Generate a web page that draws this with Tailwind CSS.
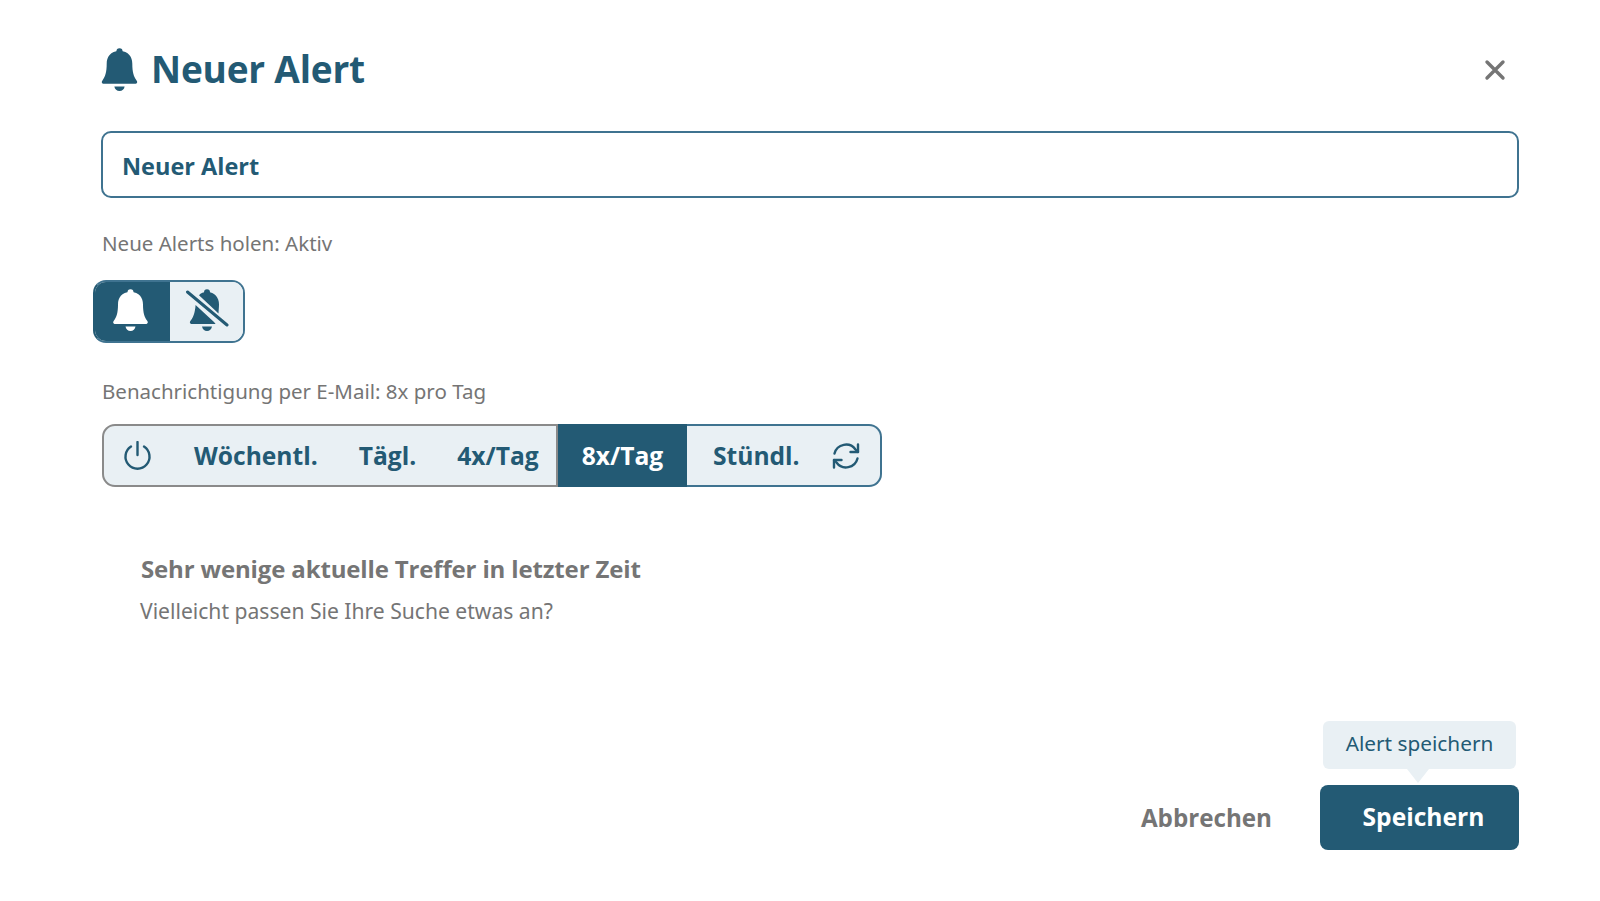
<!DOCTYPE html>
<html lang="de">
<head>
  <meta charset="UTF-8" />
  <meta name="viewport" content="width=device-width, initial-scale=1.0" />
  <script src="https://cdn.jsdelivr.net/npm/@tailwindcss/browser@4"></script>
  <title>Neuer Alert</title>
</head>
<body class="bg-white font-['Open_Sans',sans-serif] text-[#235a74]">
  <div class="h-[901px] flex flex-col pl-[101px] pr-[81px] pt-[47px] pb-[51px] overflow-hidden">

    <!-- Header -->
    <header class="flex items-center h-[44px] relative">
      <svg class="w-[37px] h-[43px] shrink-0" viewBox="0 0 36 42" fill="currentColor">
        <circle cx="18" cy="3.2" r="3" />
        <path d="M18 3C9 3 5.5 9 5.5 15.5C5.5 24 4 28 1.5 31.5C0 33.3 .8 35 2.8 35H33.2C35.2 35 36 33.3 34.5 31.5C32 28 30.5 24 30.5 15.5C30.5 9 27 3 18 3Z" />
        <path d="M13 37.5H23C22.6 40.2 20.6 42 18 42C15.4 42 13.4 40.2 13 37.5Z" />
      </svg>
      <h1 class="ml-[13px] -mt-[1px] text-[37px] leading-none font-bold tracking-[-0.2px]">Neuer Alert</h1>
      <button class="ml-auto mr-[13px] mt-[2px] text-[#757575]">
        <svg class="w-[22px] h-[22px]" viewBox="0 0 22 22" fill="none" stroke="currentColor" stroke-width="3.4" stroke-linecap="round"><path d="M3 3L19 19M19 3L3 19" /></svg>
      </button>
    </header>

    <!-- Title input -->
    <div class="mt-[40px] h-[67px] border-2 border-[#3f7390] rounded-[10px] flex items-center px-[19px]">
      <span class="mt-[5px] text-[23.5px] font-bold">Neuer Alert</span>
    </div>

    <!-- Fetch toggle -->
    <p class="mt-[31px] ml-[1px] text-[20.5px] leading-[28px] text-[#757575] font-['Noto_Sans',sans-serif]">Neue Alerts holen: Aktiv</p>
    <div class="mt-[23px] -ml-[8px] w-[152px] h-[63px] flex rounded-[13px] border-2 border-[#3f7390] border-l-[#235a74] overflow-hidden">
      <div class="w-[75px] bg-[#235a74] flex items-center justify-center text-white">
        <svg class="w-[37px] h-[42px] -mt-[3px] -ml-[4px]" viewBox="0 0 36 42" fill="currentColor">
          <circle cx="18" cy="3.2" r="3" />
          <path d="M18 3C9 3 5.5 9 5.5 15.5C5.5 24 4 28 1.5 31.5C0 33.3 .8 35 2.8 35H33.2C35.2 35 36 33.3 34.5 31.5C32 28 30.5 24 30.5 15.5C30.5 9 27 3 18 3Z" />
          <path d="M13 37.5H23C22.6 40.2 20.6 42 18 42C15.4 42 13.4 40.2 13 37.5Z" />
        </svg>
      </div>
      <div class="flex-1 bg-[#e9f0f4] flex items-center justify-center">
        <svg class="w-[44px] h-[42px] -mt-[3px]" viewBox="0 0 44 42" fill="currentColor">
          <circle cx="22" cy="3.2" r="3" />
          <path d="M22 3C18.5 3 15.8 4.2 14 6.2L33.5 24.6C33.6 21.4 34 18.8 34 15.5C34 9 30 3 22 3Z" />
          <path d="M10.6 16L29 33L30.6 35H7C5 35 4.2 33.3 5.7 31.5C8.5 28 10 23.5 10.6 16Z" />
          <path d="M17 37.5H27C26.6 40.2 24.6 42 22 42C19.4 42 17.4 40.2 17 37.5Z" />
          <path d="M2.5 3L42 36" fill="none" stroke="currentColor" stroke-width="3" stroke-linecap="round" />
        </svg>
      </div>
    </div>

    <!-- Frequency -->
    <p class="mt-[34px] ml-[1px] text-[20.5px] leading-[28px] text-[#757575] font-['Noto_Sans',sans-serif]">Benachrichtigung per E-Mail: 8x pro Tag</p>
    <div class="mt-[19px] ml-[1px] w-[780px] h-[63px] flex items-stretch text-[24.6px] font-bold">
      <div class="w-[456px] flex items-center bg-[#e9f0f4] border-2 border-[#8a8a8a] rounded-l-[13px]">
        <svg class="ml-[19px] w-[29px] h-[29px] shrink-0 -mt-[1px]" viewBox="0 0 29 29" fill="none" stroke="currentColor" stroke-width="2.4" stroke-linecap="round">
          <path d="M14.5 1V14" />
          <path d="M8 5.6A12 12 0 1 0 21 5.6" />
        </svg>
        <span class="ml-[42px] pt-[2px]">Wöchentl.</span>
        <span class="ml-[41px] pt-[2px]">Tägl.</span>
        <span class="ml-[41px] pt-[2px]">4x/Tag</span>
      </div>
      <div class="w-[129px] pt-[2px] bg-[#235a74] text-white flex items-center justify-center">8x/Tag</div>
      <div class="flex-1 flex items-center bg-[#e9f0f4] border-2 border-l-0 border-[#3f7390] rounded-r-[13px]">
        <span class="ml-[26px] pt-[2px]">Stündl.</span>
        <svg class="ml-[32px] w-[28px] h-[28px]" viewBox="0 0 28 28" fill="none" stroke="currentColor" stroke-width="2.4" stroke-linecap="round" stroke-linejoin="round">
          <path d="M2.5 11.5A11.8 11.8 0 0 1 23.5 7.5L26 10" />
          <path d="M26 2.5V10H18.5" />
          <path d="M25.5 16.5A11.8 11.8 0 0 1 4.5 20.5L2 18" />
          <path d="M2 25.5V18H9.5" />
        </svg>
      </div>
    </div>

    <!-- Hint -->
    <div class="mt-[64px] ml-[40px] text-[#757575]">
      <h2 class="text-[24px] leading-[36px] font-bold tracking-[-0.15px]">Sehr wenige aktuelle Treffer in letzter Zeit</h2>
      <p class="mt-[9px] -ml-[1px] text-[21.1px] leading-[30px] font-['Noto_Sans',sans-serif]">Vielleicht passen Sie Ihre Suche etwas an?</p>
    </div>

    <!-- Footer -->
    <div class="mt-auto flex items-center justify-end">
      <button class="mr-[48px] mt-[1px] text-[24.2px] font-bold text-[#757575]">Abbrechen</button>
      <div class="relative">
        <div class="absolute left-[3px] bottom-[81px] w-[193px] h-[48px] bg-[#e9f0f4] rounded-[6px] flex items-center justify-center text-[20.8px] pb-[2px] font-['Noto_Sans',sans-serif] whitespace-nowrap">
          Alert speichern
          <span class="absolute left-[84px] top-full w-0 h-0 border-x-[11px] border-x-transparent border-t-[14px] border-t-[#e9f0f4]"></span>
        </div>
        <button class="w-[199px] h-[65px] bg-[#235a74] rounded-[8px] text-white text-[24.6px] font-bold pl-[8px]">Speichern</button>
      </div>
    </div>
  </div>
</body>
</html>
